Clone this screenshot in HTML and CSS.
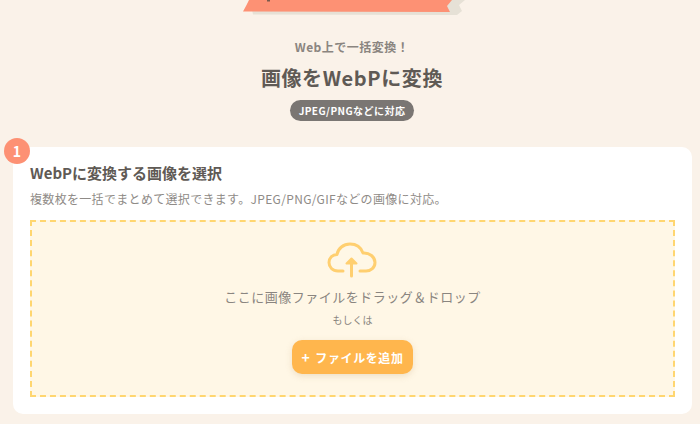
FILE: index.html
```html
<!DOCTYPE html>
<html lang="ja">
<head>
<meta charset="utf-8">
<title>画像をWebPに変換</title>
<link rel="stylesheet" href="styles.css">
</head>
<body>
<div class="ribbon-wrap">
  <svg class="ribbon" width="224" height="16" viewBox="0 0 224 16" aria-hidden="true">
    <polygon points="12,0 222,0 216,5 219,11 214,15 10,14.500 8,5" fill="#e6e1d6"/>
    <polygon points="6,0 209,0 204,6 207,12 0,11.500 3,6" fill="#fd9174"/>
    <rect x="24" y="0" width="3" height="1.500" fill="#7a5a4c"/>
  </svg>
</div>
<header class="hero">
  <p class="sub">Web上で一括変換！</p>
  <h1 class="title">画像をWebPに変換</h1>
  <span class="pill">JPEG/PNGなどに対応</span>
</header>
<section class="card">
  <span class="step">1</span>
  <h2 class="card-title">WebPに変換する画像を選択</h2>
  <p class="card-desc">複数枚を一括でまとめて選択できます。JPEG/PNG/GIFなどの画像に対応。</p>
  <div class="drop">
    <svg class="cloud" width="50" height="36" viewBox="0 0 50 36" fill="none" stroke="#ffcf70" stroke-width="3" stroke-linecap="round" stroke-linejoin="round" aria-hidden="true">
      <path d="M16 29H11C5.5 29 2 25 2 20.500C2 16 5.500 12.500 10 12.500C11 6.500 16.500 2 23 2C29 2 34 5.500 36 11C42.500 10.500 48 15 48 20.500C48 25.500 44 29 39 29H33"/>
      <path d="M24.500 34V18"/>
      <path d="M19.500 21.500H29.500L24.500 16.500Z" fill="#ffcf70" stroke-width="2"/>
    </svg>
    <p class="drop-text">ここに画像ファイルをドラッグ＆ドロップ</p>
    <p class="or">もしくは</p>
    <button class="add" type="button"><span class="plus">+</span>ファイルを追加</button>
  </div>
</section>
</body>
</html>
```
FILE: styles.css
```css
* { box-sizing: border-box; }
html, body { margin: 0; padding: 0; }
body {
  width: 700px;
  height: 424px;
  overflow: hidden;
  background: #faf2e9;
  font-family: "Noto Sans CJK JP", "Noto Sans", sans-serif;
  color: #5f5a55;
}
p, h1, h2 { margin: 0; }
.ribbon-wrap { height: 17px; padding-left: 243px; }
.ribbon { display: block; }
.hero {
  display: flex;
  flex-direction: column;
  align-items: center;
  padding-left: 4px;
}
.sub {
  margin-top: 21px;
  font-size: 12px;
  line-height: 18px;
  font-weight: 700;
  color: #8a8580;
  letter-spacing: 0.5px;
}
.title {
  margin-top: 7px;
  font-size: 20px;
  line-height: 30px;
  font-weight: 700;
  color: #5f5a55;
  letter-spacing: 0.6px;
}
.pill {
  margin-top: 7px;
  height: 21px;
  padding: 0 9px;
  border-radius: 11px;
  background: #7a7673;
  color: #fff;
  font-size: 10px;
  line-height: 21px;
  font-weight: 700;
  letter-spacing: 0.45px;
}
.card {
  position: relative;
  margin: 26px 8px 0 13px;
  height: 267px;
  padding: 14px 17px 17px;
  background: #fff;
  border-radius: 10px;
}
.step {
  position: absolute;
  left: -9px;
  top: -9px;
  width: 26px;
  height: 26px;
  border-radius: 50%;
  background: #fd9174;
  color: #fff;
  font-size: 14px;
  line-height: 26px;
  font-weight: 700;
  text-align: center;
}
.card-title {
  font-size: 15px;
  line-height: 24px;
  font-weight: 700;
  color: #5f5a55;
}
.card-desc {
  margin-top: 5px;
  font-size: 12px;
  line-height: 18px;
  color: #8f8b87;
  letter-spacing: 0.32px;
}
.drop {
  display: flex;
  flex-direction: column;
  align-items: center;
  height: 177px;
  margin-top: 12px;
  padding-top: 20px;
  padding-right: 2px;
  background: #fff7e6;
  border: 2px dashed #ffd670;
}
.cloud { display: block; }
.drop-text {
  margin-top: 10px;
  margin-left: 2px;
  font-size: 13px;
  line-height: 18px;
  color: #8a8580;
  letter-spacing: 0.5px;
}
.or {
  margin-top: 7px;
  margin-left: 2px;
  font-size: 10px;
  line-height: 14px;
  color: #8a8580;
}
.add {
  margin-top: 13px;
  margin-left: 2px;
  height: 34px;
  padding: 0 9px;
  border: 0;
  border-radius: 10px;
  background: #ffb64d;
  box-shadow: 0 2px 6px rgba(200, 170, 120, 0.3);
  color: #fff;
  font-family: inherit;
  font-size: 12px;
  font-weight: 700;
  letter-spacing: 0.6px;
}
.plus { margin-right: 5px; font-size: 14px; font-weight: 700; }
```
